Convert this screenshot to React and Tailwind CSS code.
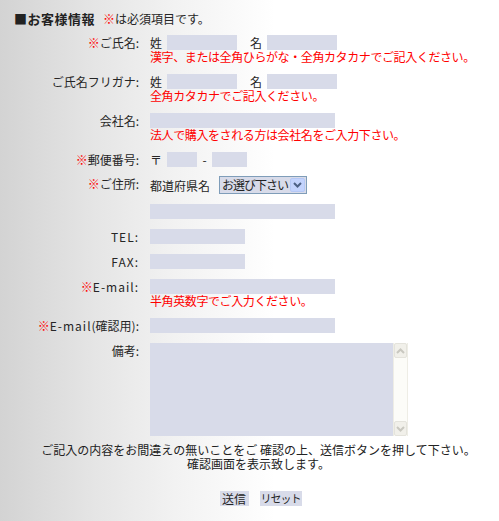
import React from "react";

const F = { fontFamily: '"Noto Sans CJK JP", "Noto Sans", sans-serif' };

function Label({ children, req }) {
  return (
    <div className="w-[139px] shrink-0 text-right h-[15px] leading-[15px] text-[#262626] whitespace-nowrap">
      {req && <span className="text-[#ff0000]">※</span>}
      {children}
    </div>
  );
}

function L({ children }) {
  return <span className="tracking-[1px]">{children}</span>;
}

function Box({ w }) {
  return <div className={`h-[15px] bg-[#d8dbe9] shrink-0 ${w}`} />;
}

function Note({ children }) {
  return (
    <div className="h-[14px] leading-[14px] text-[#ff0000] tracking-[-0.4px] whitespace-nowrap">
      {children}
    </div>
  );
}

function Row({ label, req, children, note }) {
  return (
    <div className="flex">
      <Label req={req}>{label}</Label>
      <div className="ml-[11px] flex flex-col">
        <div className="flex items-start h-[15px] leading-[15px] whitespace-nowrap">{children}</div>
        {note && <Note>{note}</Note>}
      </div>
    </div>
  );
}

export default function App() {
  return (
    <div
      style={F}
      className="w-[499px] h-[521px] overflow-hidden text-[12px] text-[#262626] bg-[linear-gradient(to_right,#d3d3d3_0%,#e6e6e6_20%,#f2f2f2_35%,#ffffff_55%)]"
    >
      <div className="pt-[11px] pl-[14px] h-[15px] leading-[15px] box-content whitespace-nowrap">
        <span className="font-bold text-[13px] tracking-[0.5px] text-[#222]">■お客様情報</span>
        <span className="ml-[8px] text-[#ff0000]">※</span>
        <span>は必須項目です。</span>
      </div>

      <div className="mt-[9px] flex flex-col gap-[10px]">
        <Row
          label="ご氏名:"
          req
          note="漢字、または全角ひらがな・全角カタカナでご記入ください。"
        >
          <span className="w-[17px]">姓</span>
          <Box w="w-[70px]" />
          <span className="ml-[13px] w-[17px]">名</span>
          <Box w="w-[70px]" />
        </Row>
        <Row label="ご氏名フリガナ:" note="全角カタカナでご記入ください。">
          <span className="w-[17px]">姓</span>
          <Box w="w-[70px]" />
          <span className="ml-[13px] w-[17px]">名</span>
          <Box w="w-[70px]" />
        </Row>
        <Row label="会社名:" note="法人で購入をされる方は会社名をご入力下さい。">
          <Box w="w-[185px]" />
        </Row>
        <Row label="郵便番号:" req>
          <span className="w-[17px]">〒</span>
          <Box w="w-[30px]" />
          <span className="w-[15px] text-center">-</span>
          <Box w="w-[35px]" />
        </Row>
        <div className="flex -mt-[1px]">
          <Label req>ご住所:</Label>
          <div className="ml-[11px] flex flex-col gap-[10px]">
            <div className="flex items-center h-[18px] whitespace-nowrap">
              <span className="w-[69px] leading-[18px] pt-[2px]">都道府県名</span>
              <div className="w-[88px] h-[18px] border border-[#7f9db9] bg-[#d8dbe9] flex items-center justify-between">
                <span className="pl-[2px] leading-[16px] text-[#222] tracking-[-1px] whitespace-nowrap">お選び下さい</span>
                <div className="w-[15px] h-[14px] mr-[1px] shrink-0 rounded-[2px] bg-[#c3d3fd] border border-[#b5c8f5] flex items-center justify-center">
                  <svg width="9" height="6" viewBox="0 0 9 6">
                    <path d="M1 1 L4.5 4.5 L8 1" fill="none" stroke="#4d6185" strokeWidth="2" />
                  </svg>
                </div>
              </div>
            </div>
            <Box w="w-[185px]" />
          </div>
        </div>
        <Row label={<L>TEL:</L>}>
          <Box w="w-[95px]" />
        </Row>
        <Row label={<L>FAX:</L>}>
          <Box w="w-[95px]" />
        </Row>
        <Row label={<L>E-mail:</L>} req note="半角英数字でご入力ください。">
          <Box w="w-[185px]" />
        </Row>
        <Row label={<><L>E-mail</L>(確認用):</>} req>
          <Box w="w-[185px]" />
        </Row>
        <div className="flex">
          <Label>備考:</Label>
          <div className="ml-[11px] flex h-[93px]">
            <div className="w-[243px] bg-[#d8dbe9]" />
            <div className="w-[15px] bg-[#fcfcf8] border-x border-[#eeede5] flex flex-col justify-between">
              <div className="h-[15px] bg-[#f1f0ea] border border-[#e4e3dc] rounded-[2px] flex items-center justify-center">
                <svg width="9" height="6" viewBox="0 0 9 6">
                  <path d="M1 5 L4.5 1.5 L8 5" fill="none" stroke="#c9c8c0" strokeWidth="2" />
                </svg>
              </div>
              <div className="h-[15px] bg-[#f1f0ea] border border-[#e4e3dc] rounded-[2px] flex items-center justify-center">
                <svg width="9" height="6" viewBox="0 0 9 6">
                  <path d="M1 1 L4.5 4.5 L8 1" fill="none" stroke="#c9c8c0" strokeWidth="2" />
                </svg>
              </div>
            </div>
          </div>
        </div>
      </div>

      <div className="mt-[7px] pl-[18px] text-center leading-[14px] text-[#222] whitespace-nowrap">
        <div>ご記入の内容をお間違えの無いことをご 確認の上、送信ボタンを押して下さい。</div>
        <div>確認画面を表示致します。</div>
      </div>

      <div className="mt-[20px] flex justify-center gap-[11px] pl-[22px] whitespace-nowrap">
        <div className="w-[29px] h-[15px] leading-[15px] bg-[#d8dbe9] text-center">送信</div>
        <div className="w-[42px] h-[15px] leading-[15px] bg-[#d8dbe9] text-center text-[11px] tracking-[-1px]">リセット</div>
      </div>
    </div>
  );
}
